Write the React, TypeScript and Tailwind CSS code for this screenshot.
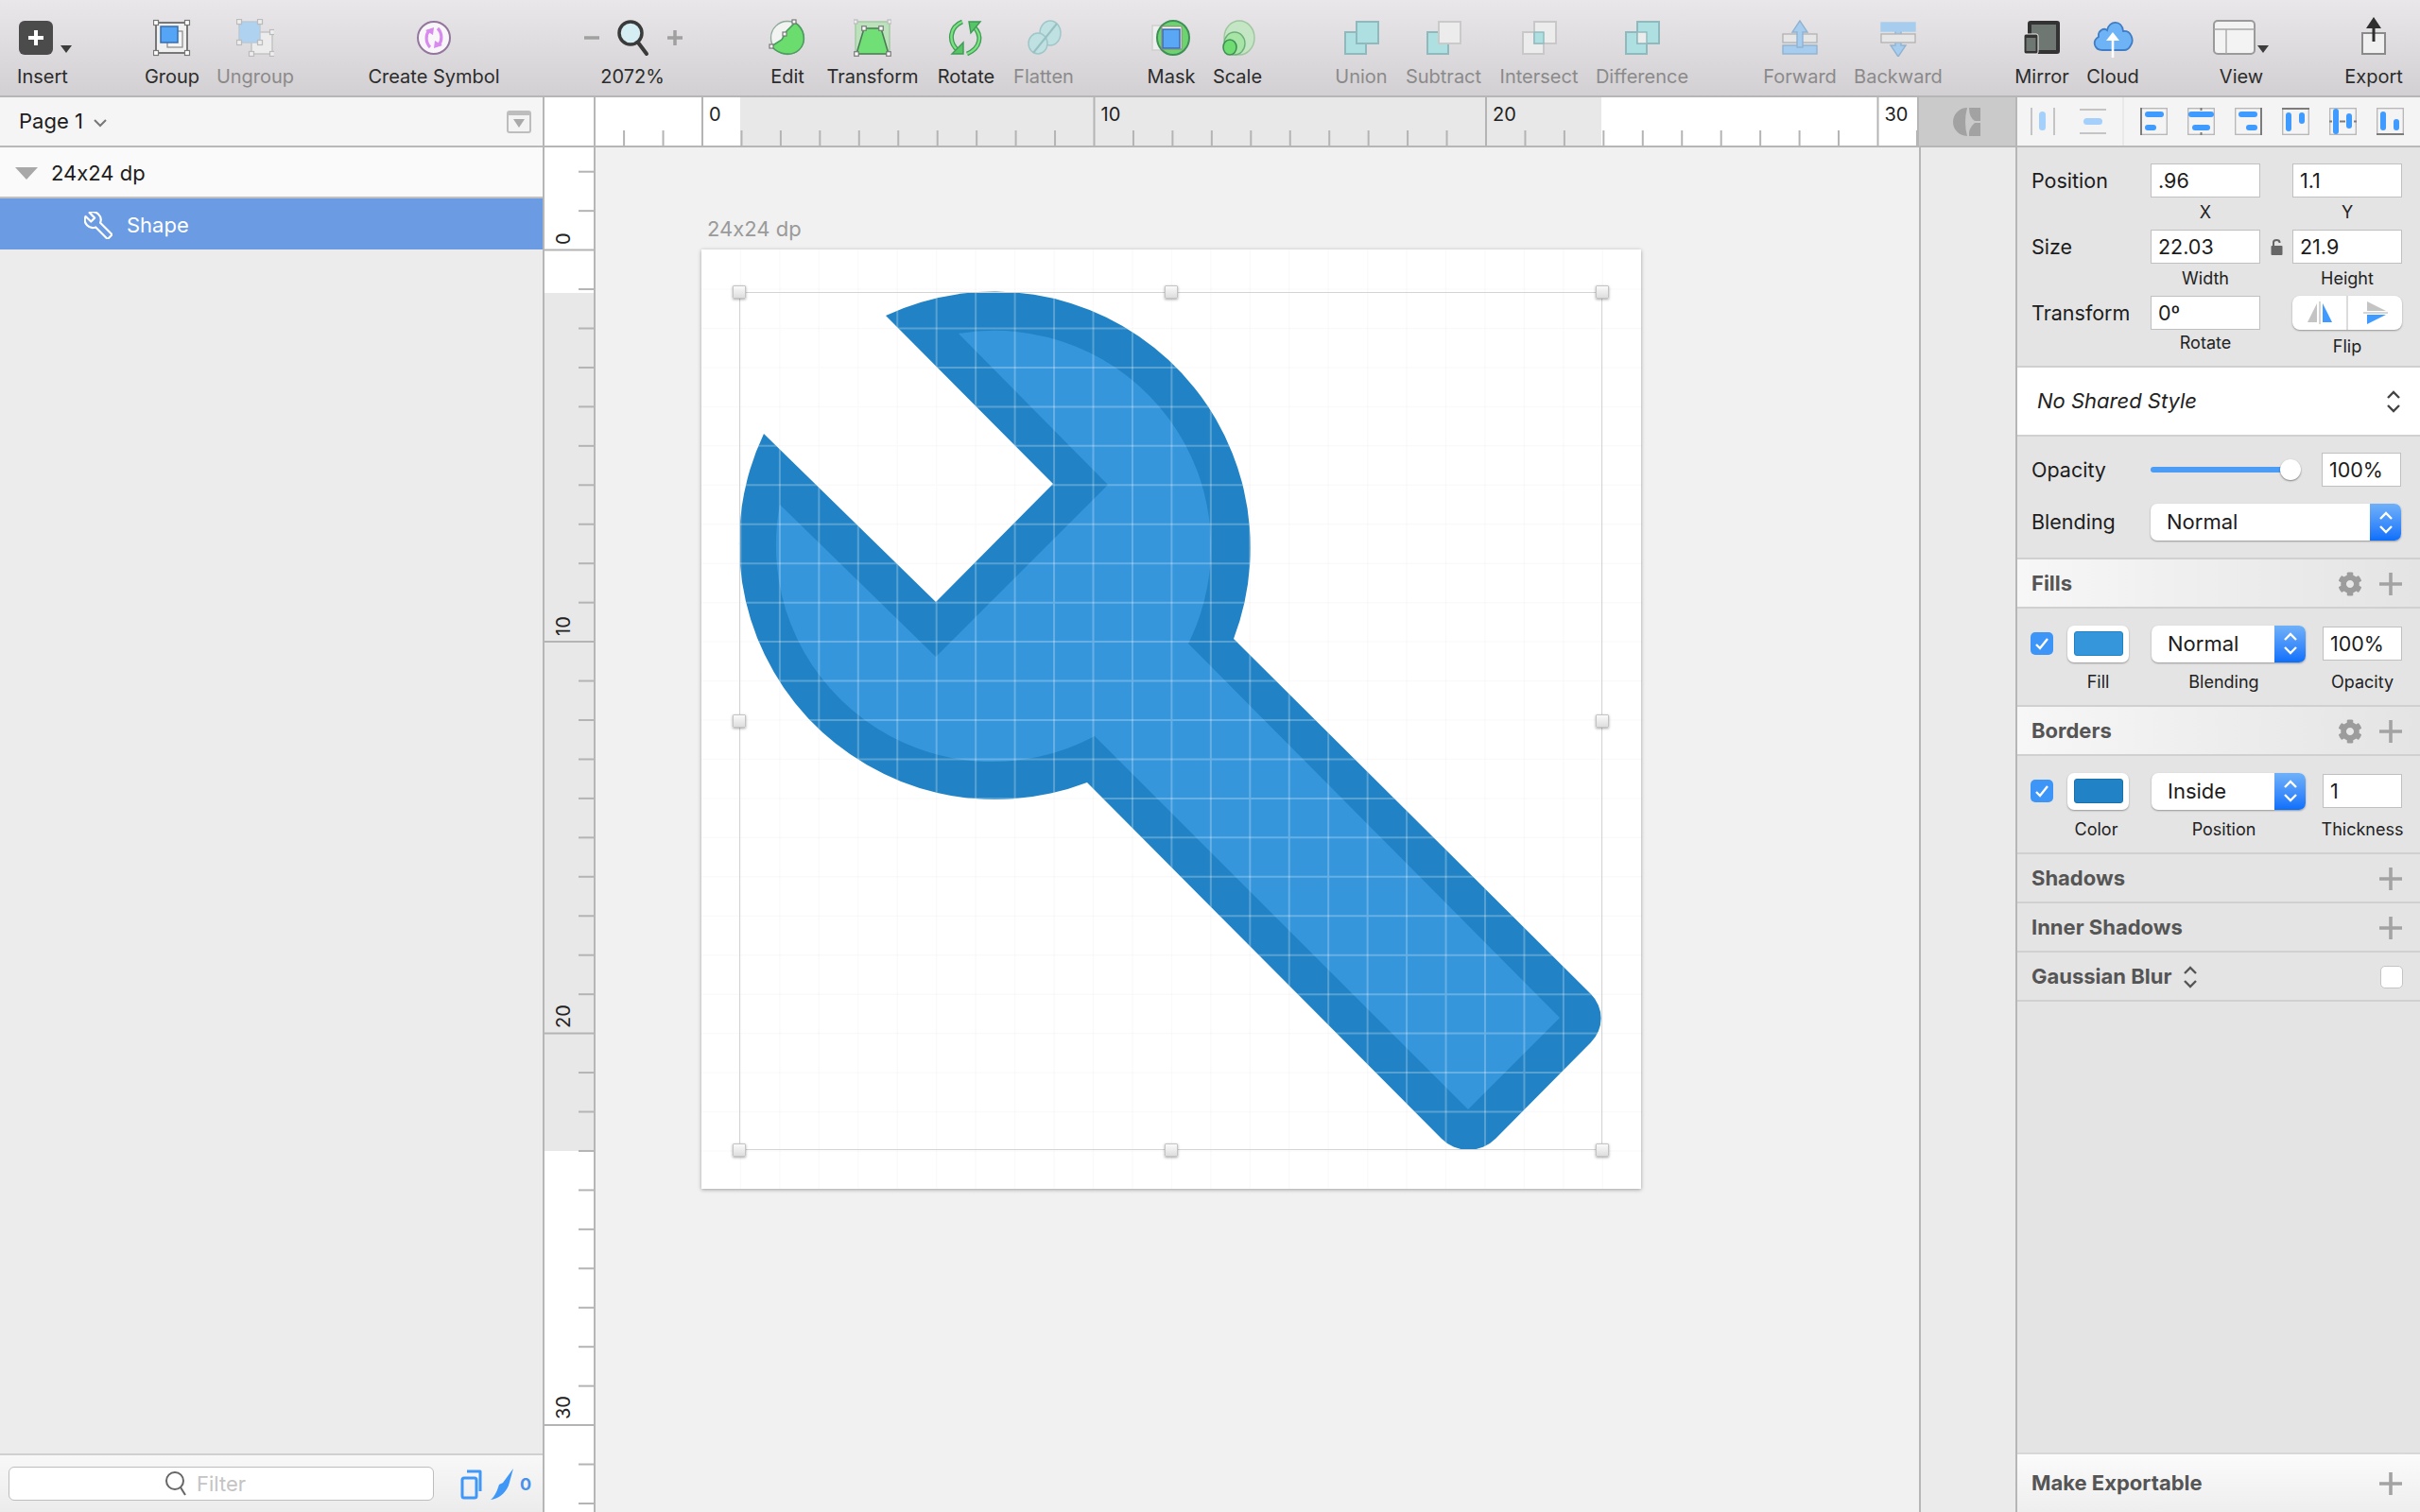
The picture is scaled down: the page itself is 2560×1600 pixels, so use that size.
import { FaCog } from 'react-icons/fa';

const UNIT = 41.45;
const WRENCH =
  'M937 334L1114 512L990 637L808 459A271 271 0 0 0 1150 828L1525 1205A40 40 0 0 0 1582 1205L1683 1103A36 36 0 0 0 1683 1052L1305 676A271 271 0 0 0 937 334Z';
const WRENCH_INNER =
  'M1014 353L1172 513L990 695L825 534A229 229 0 0 0 1158 779L1553 1174L1650 1077L1257 681A229 229 0 0 0 1014 353Z';

const range = (from: number, to: number) => {
  const out: number[] = [];
  for (let i = from; i <= to; i++) out.push(i);
  return out;
};

const Handle = ({ x, y, s = 5, fill = '#fff', stroke = '#777' }: { x: number; y: number; s?: number; fill?: string; stroke?: string }) => (
  <rect x={x - s / 2} y={y - s / 2} width={s} height={s} fill={fill} stroke={stroke} strokeWidth="1.2" />
);

const icons = {
  insert: (
    <svg width="66" height="40" viewBox="0 0 66 40">
      <rect x="8" y="2" width="36" height="36" rx="6" fill="#4b4b4b" />
      <path d="M26 12V28M18 20H34" stroke="#fff" strokeWidth="4" />
      <path d="M52 28H64L58 36Z" fill="#3c3c3c" />
    </svg>
  ),
  group: (
    <svg width="40" height="40" viewBox="0 0 40 40">
      <rect x="3" y="4" width="33" height="32" fill="#f0f0f0" stroke="#777" strokeWidth="2" />
      <rect x="15" y="13" width="16" height="17" fill="#f4f4f4" stroke="#888" strokeWidth="1.2" />
      <rect x="8" y="8" width="18" height="17" fill="#55a5f7" stroke="#3a6cab" strokeWidth="1.5" />
      <Handle x={3} y={4} />
      <Handle x={36} y={4} />
      <Handle x={3} y={36} />
      <Handle x={36} y={36} />
    </svg>
  ),
  ungroup: (
    <svg width="40" height="40" viewBox="0 0 40 40">
      <rect x="16" y="14" width="22" height="23" fill="#ececec" stroke="#c4c4c4" strokeWidth="1.5" />
      <rect x="3" y="3" width="22" height="22" fill="#aed2ef" stroke="#b9c9d6" strokeWidth="1.5" />
      <Handle x={3} y={3} fill="#eee" stroke="#bbb" />
      <Handle x={25} y={3} fill="#eee" stroke="#bbb" />
      <Handle x={3} y={25} fill="#eee" stroke="#bbb" />
      <Handle x={25} y={25} fill="#eee" stroke="#bbb" />
      <Handle x={38} y={14} fill="#eee" stroke="#bbb" />
      <Handle x={16} y={37} fill="#eee" stroke="#bbb" />
      <Handle x={38} y={37} fill="#eee" stroke="#bbb" />
    </svg>
  ),
  symbol: (
    <svg width="40" height="40" viewBox="0 0 40 40">
      <circle cx="20" cy="20" r="17" fill="#f8f6f9" stroke="#94759e" strokeWidth="2" />
      <path d="M16 30C11 25 11 17 15 12" fill="none" stroke="#d88aef" strokeWidth="3.2" />
      <path d="M24 10C29 15 29 23 25 28" fill="none" stroke="#d88aef" strokeWidth="3.2" />
      <path d="M11 12L20 9L19 17Z" fill="#d88aef" />
      <path d="M29 28L20 31L21 23Z" fill="#d88aef" />
    </svg>
  ),
  zoom: (
    <svg width="110" height="40" viewBox="0 0 110 40">
      <path d="M4 20H20" stroke="#a0a0a0" strokeWidth="3.5" />
      <path d="M92 20H108M100 12V28" stroke="#a0a0a0" strokeWidth="3.5" />
      <circle cx="53" cy="15" r="12" fill="#d5eef3" stroke="#3a3a3a" strokeWidth="3.5" />
      <path d="M61 25L70 37" stroke="#3a3a3a" strokeWidth="4" strokeLinecap="round" />
    </svg>
  ),
  edit: (
    <svg width="40" height="40" viewBox="0 0 40 40">
      <circle cx="20" cy="20" r="17.5" fill="#f2f4f2" stroke="#8fa99a" strokeWidth="1.3" />
      <path d="M28 4C38 10 41 25 32 33C25 39 12 39 3 29L14 22L19 13Z" fill="#6bdc6e" stroke="#4c9b60" strokeWidth="1.6" />
      <Handle x={27} y={3} s={4} />
      <Handle x={17} y={16} s={4} />
      <Handle x={3} y={29} s={4} />
    </svg>
  ),
  transform: (
    <svg width="40" height="40" viewBox="0 0 40 40">
      <rect x="2" y="3" width="36" height="34" fill="#bce2bc" stroke="#a6c9a6" strokeWidth="1.5" />
      <path d="M11 10H29L37 37H3Z" fill="#70e076" stroke="#4c7a56" strokeWidth="1.6" />
      <Handle x={2} y={3} s={4} fill="#eee" stroke="#bbb" />
      <Handle x={38} y={3} s={4} fill="#eee" stroke="#bbb" />
      <Handle x={11} y={10} s={4.5} />
      <Handle x={29} y={10} s={4.5} />
      <Handle x={3} y={37} s={4.5} />
      <Handle x={37} y={37} s={4.5} />
    </svg>
  ),
  rotate: (
    <svg width="46" height="40" viewBox="0 0 46 40">
      <path d="M19 3C6 8 3 24 15 34" fill="none" stroke="#3f9a57" strokeWidth="5" />
      <path d="M19 3C6 8 3 24 15 34" fill="none" stroke="#7be280" strokeWidth="2.4" />
      <path d="M24 37C38 31 41 18 31 8" fill="none" stroke="#3f9a57" strokeWidth="5" />
      <path d="M24 37C38 31 41 18 31 8" fill="none" stroke="#7be280" strokeWidth="2.4" />
      <path d="M8 37H20L20 25Z" fill="#57c465" stroke="#3f9a57" strokeWidth="1.4" />
      <path d="M38 3H26L28 15Z" fill="#57c465" stroke="#3f9a57" strokeWidth="1.4" />
    </svg>
  ),
  flatten: (
    <svg width="40" height="40" viewBox="0 0 40 40">
      <ellipse cx="27" cy="15" rx="11" ry="13" fill="#bfe1e2" stroke="#9fc6c9" strokeWidth="1.5" />
      <ellipse cx="14" cy="26" rx="10" ry="11" fill="#bfe1e2" stroke="#9fc6c9" strokeWidth="1.5" />
      <path d="M9 36L34 5" stroke="#98bfc2" strokeWidth="2" />
    </svg>
  ),
  mask: (
    <svg width="44" height="40" viewBox="0 0 44 40">
      <rect x="2" y="7" width="20" height="26" fill="#efefef" stroke="#cfcfcf" strokeWidth="1.5" />
      <ellipse cx="24" cy="20" rx="17" ry="18" fill="#6cd46e" stroke="#3f8f59" strokeWidth="2" />
      <rect x="12" y="8" width="21" height="24" fill="#fff" stroke="#9a7f7f" strokeWidth="1" />
      <rect x="13" y="11" width="18" height="20" fill="#59a7f5" stroke="#3a6dab" strokeWidth="1.5" />
    </svg>
  ),
  scale: (
    <svg width="40" height="40" viewBox="0 0 40 40">
      <ellipse cx="22" cy="20" rx="16" ry="18" fill="#c4e6c4" stroke="#9ec69e" strokeWidth="1.4" />
      <ellipse cx="17" cy="26" rx="11" ry="12" fill="#a6e5a6" stroke="#6fae7a" strokeWidth="1.4" />
      <ellipse cx="12" cy="30" rx="7" ry="8" fill="#6fdc72" stroke="#3f8f55" strokeWidth="1.6" />
    </svg>
  ),
  union: (
    <svg width="40" height="40" viewBox="0 0 40 40">
      <rect x="3" y="14" width="22" height="23" fill="#aee0e2" stroke="#8fb9bd" strokeWidth="2" />
      <rect x="15" y="3" width="23" height="23" fill="#aee0e2" stroke="#8fb9bd" strokeWidth="2" />
    </svg>
  ),
  subtract: (
    <svg width="40" height="40" viewBox="0 0 40 40">
      <rect x="3" y="14" width="22" height="23" fill="#aee0e2" stroke="#8fb9bd" strokeWidth="2" />
      <rect x="15" y="3" width="23" height="23" fill="#ececec" stroke="#cacaca" strokeWidth="2" />
    </svg>
  ),
  intersect: (
    <svg width="40" height="40" viewBox="0 0 40 40">
      <rect x="3" y="14" width="22" height="23" fill="#ececec" stroke="#c8c8c8" strokeWidth="2" />
      <rect x="15" y="3" width="23" height="23" fill="#ececec" stroke="#c8c8c8" strokeWidth="2" />
      <rect x="15" y="14" width="10" height="12" fill="#aee0e2" stroke="#8fb9bd" strokeWidth="1.4" />
    </svg>
  ),
  difference: (
    <svg width="40" height="40" viewBox="0 0 40 40">
      <rect x="3" y="14" width="22" height="23" fill="#aee0e2" stroke="#8fb9bd" strokeWidth="2" />
      <rect x="15" y="3" width="23" height="23" fill="#aee0e2" stroke="#8fb9bd" strokeWidth="2" />
      <rect x="15" y="14" width="10" height="12" fill="#ececec" stroke="#8fb9bd" strokeWidth="1.4" />
    </svg>
  ),
  forward: (
    <svg width="40" height="40" viewBox="0 0 40 40">
      <rect x="2" y="28" width="36" height="9" fill="#a7cdee" stroke="#91b3d2" strokeWidth="1.4" />
      <rect x="2" y="16" width="36" height="9" fill="#e6e6e6" stroke="#b5b5b5" strokeWidth="1.4" />
      <path d="M20 2L12 14H17V30H23V14H28Z" fill="#a7cdee" stroke="#91b3d2" strokeWidth="1.4" />
    </svg>
  ),
  backward: (
    <svg width="40" height="40" viewBox="0 0 40 40">
      <path d="M17 8V28H12L20 40L28 28H23V8Z" fill="#a7cdee" stroke="#91b3d2" strokeWidth="1.4" />
      <rect x="2" y="4" width="36" height="9" fill="#a7cdee" stroke="#a7cdee" strokeWidth="1.4" />
      <rect x="2" y="16" width="36" height="9" fill="#e6e6e6" stroke="#b5b5b5" strokeWidth="1.4" />
    </svg>
  ),
  mirror: (
    <svg width="40" height="40" viewBox="0 0 40 40">
      <rect x="5" y="2" width="34" height="35" rx="3" fill="#333" />
      <rect x="9" y="6" width="26" height="27" fill="#6e7772" />
      <rect x="1" y="16" width="15" height="21" rx="2" fill="#333" stroke="#eee" strokeWidth="1" />
      <rect x="3.5" y="20" width="10" height="14" fill="#6e7772" />
    </svg>
  ),
  cloud: (
    <svg width="44" height="44" viewBox="0 0 44 44">
      <path d="M11 33C2 33 0 23 7 19C6 12 13 9 16 12C18 1 32 1 33 13C41 12 45 22 41 28C39 32 36 33 34 33Z" fill="#6fb3f7" stroke="#3f7dc5" strokeWidth="1.8" />
      <path d="M22 41V20" stroke="#fff" strokeWidth="2.6" />
      <path d="M22 14L15 23H29Z" fill="#fff" />
    </svg>
  ),
  view: (
    <svg width="60" height="40" viewBox="0 0 60 40">
      <rect x="1" y="2" width="43" height="35" rx="4" fill="#f3f3f3" stroke="#9a9a9a" strokeWidth="2" />
      <path d="M1 11H44M14 11V37" stroke="#a8a8a8" strokeWidth="1.4" />
      <path d="M47 28H59L53 36Z" fill="#3c3c3c" />
    </svg>
  ),
  exportIcon: (
    <svg width="40" height="40" viewBox="0 0 40 40" className="overflow-visible">
      <rect x="8" y="15" width="24" height="22" fill="#f0f0f0" stroke="#8a8a8a" strokeWidth="2" />
      <path d="M20 6V24" stroke="#2f2f2f" strokeWidth="3" />
      <path d="M20 -2L12 10H28Z" fill="#2f2f2f" />
    </svg>
  ),
};

const ToolItem = ({ label, icon, cls, off }: { label: string; icon: React.ReactNode; cls: string; off?: boolean }) => (
  <div className={`flex flex-col items-center pt-[20px] ${cls}`}>
    <div className="h-[40px] flex justify-center">{icon}</div>
    <span className={`mt-[9px] text-[20px] leading-[24px] whitespace-nowrap ${off ? 'text-[#8b8a8b]' : 'text-[#2c2c2c]'}`}>{label}</span>
  </div>
);

const Toolbar = () => (
  <div className="h-[103px] flex border-b-2 border-[#b6b6b6] bg-gradient-to-b from-[#e9e7e9] to-[#d2d0d2]">
    <ToolItem label="Insert" icon={icons.insert} cls="w-[90px]" />
    <ToolItem label="Group" icon={icons.group} cls="w-[88px] ml-[48px]" />
    <ToolItem label="Ungroup" icon={icons.ungroup} cls="w-[88px]" off />
    <ToolItem label="Create Symbol" icon={icons.symbol} cls="w-[150px] ml-[70px]" />
    <ToolItem label="2072%" icon={icons.zoom} cls="w-[120px] ml-[75px]" />
    <ToolItem label="Edit" icon={icons.edit} cls="w-[60px] ml-[74px]" />
    <ToolItem label="Transform" icon={icons.transform} cls="w-[120px]" />
    <ToolItem label="Rotate" icon={icons.rotate} cls="w-[78px]" />
    <ToolItem label="Flatten" icon={icons.flatten} cls="w-[86px]" off />
    <ToolItem label="Mask" icon={icons.mask} cls="w-[70px] ml-[57px]" />
    <ToolItem label="Scale" icon={icons.scale} cls="w-[70px]" />
    <ToolItem label="Union" icon={icons.union} cls="w-[80px] ml-[56px]" off />
    <ToolItem label="Subtract" icon={icons.subtract} cls="w-[94px]" off />
    <ToolItem label="Intersect" icon={icons.intersect} cls="w-[108px]" off />
    <ToolItem label="Difference" icon={icons.difference} cls="w-[110px]" off />
    <ToolItem label="Forward" icon={icons.forward} cls="w-[100px] ml-[62px]" off />
    <ToolItem label="Backward" icon={icons.backward} cls="w-[108px]" off />
    <ToolItem label="Mirror" icon={icons.mirror} cls="w-[80px] ml-[58px]" />
    <ToolItem label="Cloud" icon={icons.cloud} cls="w-[70px]" />
    <ToolItem label="View" icon={icons.view} cls="w-[80px] ml-[61px]" />
    <ToolItem label="Export" icon={icons.exportIcon} cls="w-[90px] ml-[55px]" />
  </div>
);

const LayersPanel = () => (
  <div className="w-[576px] shrink-0 flex flex-col border-r-2 border-[#b6b6b6] bg-[#ececec]">
    <div className="h-[53px] flex items-center pl-[20px] pr-[12px] border-b-2 border-[#b9b9b9] bg-[#f5f5f5]">
      <span className="text-[22px] text-[#1c1c1c]">Page 1</span>
      <svg width="16" height="10" viewBox="0 0 16 10" className="ml-[10px] mt-[2px]">
        <path d="M2 2L8 8L14 2" fill="none" stroke="#777" strokeWidth="2" />
      </svg>
      <div className="ml-auto w-[26px] h-[24px] rounded-[3px] border-2 border-[#bdbdbd] bg-[#f3f3f3] flex items-center justify-center border-t-[5px]">
        <div className="w-0 h-0 border-x-[6px] border-x-transparent border-t-[9px] border-t-[#a9a9a9]" />
      </div>
    </div>
    <div className="h-[54px] flex items-center pl-[16px] pt-[2px] bg-[#fafafa] border-b-2 border-[#c0c0c0]">
      <div className="w-0 h-0 border-x-[12px] border-x-transparent border-t-[13px] border-t-[#a8a8a8]" />
      <span className="ml-[14px] text-[22px] text-[#1c1c1c]">24x24 dp</span>
    </div>
    <div className="h-[54px] flex items-center pl-[89px] pt-[2px] bg-[#6b9be3]">
      <svg width="30" height="29" viewBox="770 300 936 930">
        <path d={WRENCH} fill="none" stroke="#fff" strokeWidth="70" strokeLinejoin="round" />
      </svg>
      <span className="ml-[15px] text-[22px] text-white">Shape</span>
    </div>
    <div className="flex-1" />
    <div className="h-[62px] flex items-center border-t-2 border-[#d0d0d0] bg-gradient-to-b from-[#f8f8f8] to-[#ececec] pl-[9px]">
      <div className="w-[450px] h-[36px] pr-[34px] rounded-[6px] border border-[#bdbdbd] bg-white flex items-center justify-center">
        <svg width="24" height="28" viewBox="0 0 24 28">
          <circle cx="11" cy="11" r="9" fill="none" stroke="#666" strokeWidth="2" />
          <path d="M17 18L22 26" stroke="#666" strokeWidth="2" />
        </svg>
        <span className="ml-[10px] text-[22px] text-[#c4c4c4]">Filter</span>
      </div>
      <svg width="24" height="33" viewBox="0 0 24 33" className="ml-[28px]">
        <rect x="2" y="10" width="15" height="21" rx="2" fill="none" stroke="#3f97f8" strokeWidth="3" />
        <path d="M7 3H21V24" fill="none" stroke="#3f97f8" strokeWidth="3" strokeLinejoin="round" />
      </svg>
      <svg width="25" height="33" viewBox="0 0 25 33" className="ml-[8px]">
        <path d="M24 0L19 18C15 27 8 32 0 33C5 29 7 23 9 17L13 15Z" fill="#3f97f8" />
      </svg>
      <span className="ml-[6px] text-[18px] font-bold text-[#4a8fe8]">0</span>
    </div>
  </div>
);

const RulerH = () => (
  <div className="w-[1400px] relative border-r-2 border-[#b6b6b6] bg-white">
    <svg width="1398" height="51" viewBox="630 103 1398 51" className="absolute left-0 top-0">
      <rect x="783" y="103" width="911" height="51" fill="#e8e8e8" />
      {range(-2, 31).map((n) => {
        const x = 743 + n * UNIT;
        return <path key={n} d={`M${x} ${n % 10 === 0 ? 103 : 138}V154`} stroke="#b4b4b4" strokeWidth="2" />;
      })}
    </svg>
    {[0, 10, 20, 30].map((n) => (
      <span key={n} className="absolute top-[6px] text-[20px] leading-[24px] text-[#222]" style={{ left: 743 - 630 + n * UNIT + 7 }}>
        {n}
      </span>
    ))}
  </div>
);

const RulerV = () => (
  <div className="w-[54px] h-full shrink-0 relative border-r-2 border-[#b6b6b6] bg-white">
    <svg width="52" height="1444" viewBox="576 156 52 1444" className="absolute left-0 top-0">
      <rect x="576" y="310" width="52" height="908" fill="#e8e8e8" />
      {range(-2, 32).map((n) => {
        const y = 264.6 + n * UNIT;
        return <path key={n} d={`M${n % 10 === 0 ? 576 : 612} ${y}H628`} stroke="#b4b4b4" strokeWidth="2" />;
      })}
    </svg>
    {[0, 10, 20, 30].map((n) => (
      <span
        key={n}
        className="absolute left-[6px] w-[28px] h-[28px] text-left text-[20px] leading-[28px] text-[#222] -rotate-90 origin-center"
        style={{ top: 264.6 - 156 + n * UNIT - 34 }}
      >
        {n}
      </span>
    ))}
  </div>
);

const Wrench = () => (
  <svg width="995" height="994" viewBox="742 264 995 994" className="absolute left-0 top-0">
    <defs>
      <clipPath id="wrench-clip">
        <path d={WRENCH} />
      </clipPath>
    </defs>
    {range(1, 23).map((n) => (
      <path key={n} d={`M${742 + n * UNIT} 264V1258M742 ${264.6 + n * UNIT}H1737`} stroke="#000" strokeOpacity="0.02" strokeWidth="1.5" />
    ))}
    <path d={WRENCH} fill="#2183c5" />
    <path d={WRENCH_INNER} fill="#3596dc" />
    <g clipPath="url(#wrench-clip)">
      {range(1, 23).map((n) => (
        <path key={n} d={`M${742 + n * UNIT} 264V1258M742 ${264.6 + n * UNIT}H1737`} stroke="#fff" strokeOpacity="0.25" strokeWidth="2" />
      ))}
    </g>
  </svg>
);

const SizeHandle = () => (
  <div className="w-[14px] h-[14px] rounded-[1px] border border-[#c4c4c4] bg-gradient-to-b from-[#fafafa] to-[#dedede] shadow-[0_1px_3px_rgba(0,0,0,0.35)]" />
);

const Artboard = () => (
  <div className="relative w-[994px] h-[994px] bg-white shadow-[0_1px_4px_rgba(0,0,0,0.35)]">
    <Wrench />
    <div className="absolute left-[40px] top-[45px] w-[913px] h-[908px] border-[1.5px] border-[#d4d4d4]" />
    <div className="absolute left-[33px] top-[38px] w-[927px] h-[922px] flex flex-col justify-between">
      <div className="flex justify-between">
        <SizeHandle />
        <SizeHandle />
        <SizeHandle />
      </div>
      <div className="flex justify-between">
        <SizeHandle />
        <SizeHandle />
      </div>
      <div className="flex justify-between">
        <SizeHandle />
        <SizeHandle />
        <SizeHandle />
      </div>
    </div>
  </div>
);

const Canvas = () => (
  <div className="w-[1402px] shrink-0 border-r-2 border-[#b6b6b6] bg-[#f1f1f1] pl-[112px] pt-[74px]">
    <div className="h-[24px] mb-[10px] pl-[6px] text-[22px] leading-[24px] text-[#9a9a9a]">24x24 dp</div>
    <Artboard />
  </div>
);

const Pill = ({ x, y, w, h }: { x: number; y: number; w: number; h: number }) => (
  <rect x={x} y={y} width={w} height={h} rx={Math.min(w, h) / 2} fill="#3f9bff" />
);

const AlignIcon = ({ edge, pills }: { edge: string; pills: number[][] }) => (
  <svg width="29" height="29" viewBox="0 0 29 29">
    <rect x="0.7" y="0.7" width="27.6" height="27.6" fill="none" stroke="#b5b5b5" strokeWidth="1.3" />
    <path d={edge} stroke="#7c7c7c" strokeWidth="2" fill="none" />
    {pills.map((p, i) => (
      <Pill key={i} x={p[0]} y={p[1]} w={p[2]} h={p[3]} />
    ))}
  </svg>
);

const AlignBar = () => (
  <div className="h-[53px] flex border-b-2 border-[#b9b9b9] bg-[#f4f4f4]">
    <div className="w-[113px] flex items-center pl-[14px] border-r-2 border-[#e9e9e9]">
      <svg width="26" height="29" viewBox="0 0 26 29">
        <path d="M1 0V29M25 0V29" stroke="#c4c4c4" strokeWidth="2" />
        <rect x="9" y="4" width="7" height="20" rx="3.5" fill="#a4d0fb" />
      </svg>
      <svg width="28" height="29" viewBox="0 0 28 29" className="ml-[26px]">
        <path d="M0 2H28M0 27H28" stroke="#c4c4c4" strokeWidth="2" />
        <rect x="4" y="11" width="20" height="7" rx="3.5" fill="#a4d0fb" />
      </svg>
    </div>
    <div className="flex items-center gap-[21px] pl-[17px]">
      <AlignIcon edge="M1 0V29" pills={[[5, 4, 20, 6], [5, 18, 12, 6]]} />
      <AlignIcon edge="M14.5 0V3M14.5 26V29" pills={[[1, 4, 27, 6], [5, 18, 19, 6]]} />
      <AlignIcon edge="M28 0V29" pills={[[4, 4, 20, 6], [12, 18, 12, 6]]} />
      <AlignIcon edge="M0 1H29" pills={[[4, 5, 6, 20], [18, 5, 6, 12]]} />
      <AlignIcon edge="M0 14.5H3M11 14.5H17M26 14.5H29" pills={[[4, 1, 6, 27], [18, 6, 6, 16]]} />
      <AlignIcon edge="M0 28H29" pills={[[4, 4, 6, 20], [18, 12, 6, 12]]} />
    </div>
  </div>
);

const Box = ({ value, cls = 'w-[116px]' }: { value: string; cls?: string }) => (
  <div className={`h-[36px] border-[1.5px] border-[#c0c0c0] bg-white pl-[7px] flex items-center text-[21.5px] text-[#1c1c1c] ${cls}`}>{value}</div>
);

const Caption = ({ text, cls = 'w-[116px]' }: { text: string; cls?: string }) => (
  <div className={`h-[30px] flex items-center justify-center whitespace-nowrap text-[18px] text-[#222] ${cls}`}>{text}</div>
);

const UpDown = ({ color, size = 'w-[16px] h-[26px]' }: { color: string; size?: string }) => (
  <svg viewBox="0 0 16 26" className={size}>
    <path d="M2 9L8 3L14 9M2 17L8 23L14 17" fill="none" stroke={color} strokeWidth="2.4" />
  </svg>
);

const Select = ({ value, cls, blue }: { value: string; cls: string; blue: string }) => (
  <div className={`h-[39px] flex items-stretch rounded-[7px] bg-white shadow-[0_1px_2px_rgba(0,0,0,0.35)] overflow-hidden ${cls}`}>
    <span className="flex-1 pl-[17px] flex items-center text-[22px] text-[#1c1c1c]">{value}</span>
    <div className={`flex items-center justify-center bg-gradient-to-b from-[#6fb0f8] to-[#0a6ffb] ${blue}`}>
      <UpDown color="#fff" />
    </div>
  </div>
);

const Check = () => (
  <div className="w-[24px] h-[24px] rounded-[5px] bg-[#3d96f7] flex items-center justify-center">
    <svg width="16" height="14" viewBox="0 0 16 14">
      <path d="M2 8L6 12L14 2" fill="none" stroke="#fff" strokeWidth="2.4" />
    </svg>
  </div>
);

const Swatch = ({ color, edge }: { color: string; edge: string }) => (
  <div className="w-[65px] h-[39px] rounded-[7px] bg-white shadow-[0_1px_2px_rgba(0,0,0,0.35)] flex items-center justify-center">
    <div className={`w-[52px] h-[26px] rounded-[3px] border-[1.5px] ${color} ${edge}`} />
  </div>
);

const Plus = () => (
  <svg width="24" height="24" viewBox="0 0 24 24">
    <path d="M12 0V24M0 12H24" stroke="#a3a3a3" strokeWidth="3.6" />
  </svg>
);

const Header = ({ title, gear, cls }: { title: string; gear?: boolean; cls?: string }) => (
  <div className={`h-[52px] flex items-center pl-[15px] pr-[19px] pt-[1px] border-b-2 border-[#d0d0d0] ${cls ?? ''}`}>
    <span className="text-[22px] font-bold text-[#555]">{title}</span>
    {gear && <FaCog className="ml-auto mr-[18px] text-[26px] text-[#9c9c9c]" />}
    <div className={gear ? '' : 'ml-auto'}>
      <Plus />
    </div>
  </div>
);

const Inspector = () => (
  <div className="w-[426px] shrink-0 flex flex-col bg-[#e4e4e4]">
    <AlignBar />
    <div className="h-[233px] pt-[17px] pl-[15px] border-b-2 border-[#d0d0d0]">
      <div className="h-[70px] flex">
        <span className="w-[126px] h-[36px] flex items-center text-[21.5px] text-[#1c1c1c]">Position</span>
        <div>
          <Box value=".96" />
          <Caption text="X" />
        </div>
        <div className="ml-[34px]">
          <Box value="1.1" />
          <Caption text="Y" />
        </div>
      </div>
      <div className="h-[70px] flex">
        <span className="w-[126px] h-[36px] flex items-center text-[21.5px] text-[#1c1c1c]">Size</span>
        <div>
          <Box value="22.03" />
          <Caption text="Width" />
        </div>
        <div className="w-[34px] h-[36px] flex items-center justify-center">
          <svg width="13" height="18" viewBox="0 0 13 18">
            <path d="M3 8V4.5C3 1 9.5 1 9.5 4.5V5" fill="none" stroke="#666" strokeWidth="2" />
            <rect x="0.5" y="8" width="12" height="10" rx="1" fill="#666" />
          </svg>
        </div>
        <div>
          <Box value="21.9" />
          <Caption text="Height" />
        </div>
      </div>
      <div className="flex">
        <span className="w-[126px] h-[36px] flex items-center text-[21.5px] text-[#1c1c1c]">Transform</span>
        <div>
          <Box value="0º" />
          <Caption text="Rotate" cls="w-[116px] -mt-[2px]" />
        </div>
        <div className="ml-[34px]">
          <div className="w-[116px] h-[36px] rounded-[8px] bg-white shadow-[0_1px_2px_rgba(0,0,0,0.35)] flex">
            <div className="flex-1 flex items-center justify-center border-r-2 border-[#dcdcdc]">
              <svg width="28" height="24" viewBox="0 0 28 24">
                <path d="M11 2V22H1Z" fill="#c4c4c4" />
                <path d="M17 2V22H27Z" fill="#3f9bff" />
                <path d="M14 0V24" stroke="#c4c4c4" strokeWidth="1.4" />
              </svg>
            </div>
            <div className="flex-1 flex items-center justify-center">
              <svg width="26" height="26" viewBox="0 0 26 26">
                <path d="M4 1V11H24Z" fill="#c4c4c4" />
                <path d="M4 25V15H24Z" fill="#3f9bff" />
                <path d="M0 13H26" stroke="#c4c4c4" strokeWidth="1.4" />
              </svg>
            </div>
          </div>
          <Caption text="Flip" cls="w-[116px] mt-[2px]" />
        </div>
      </div>
    </div>
    <div className="h-[73px] flex items-center pl-[21px] pr-[20px] bg-white border-b-2 border-[#d0d0d0]">
      <span className="text-[22px] italic text-[#222]">No Shared Style</span>
      <div className="ml-auto">
        <UpDown color="#444" />
      </div>
    </div>
    <div className="h-[130px] pt-[17px] pl-[15px] border-b-2 border-[#d0d0d0]">
      <div className="h-[54px] flex items-start">
        <span className="w-[126px] h-[36px] flex items-center text-[21.5px] text-[#1c1c1c]">Opacity</span>
        <div className="w-[160px] h-[36px] flex items-center">
          <div className="w-[140px] h-[6px] rounded-l-[3px] bg-[#4a9cf5]" />
          <div className="w-[22px] h-[22px] -ml-[3px] rounded-full bg-white shadow-[0_1px_2px_rgba(0,0,0,0.45)]" />
        </div>
        <Box value="100%" cls="w-[84px] ml-[21px]" />
      </div>
      <div className="flex items-center">
        <span className="w-[126px] text-[21.5px] text-[#1c1c1c]">Blending</span>
        <Select value="Normal" cls="w-[265px]" blue="w-[33px]" />
      </div>
    </div>
    <Header title="Fills" gear cls="bg-gradient-to-r from-[#f7f7f7] to-[#e4e4e4]" />
    <div className="h-[104px] pt-[17px] pl-[14px] border-b-2 border-[#d0d0d0]">
      <div className="flex items-center h-[40px]">
        <Check />
        <div className="ml-[15px]">
          <Swatch color="bg-[#3596dc]" edge="border-[#2183c5]" />
        </div>
        <Select value="Normal" cls="w-[163px] ml-[24px]" blue="w-[33px]" />
        <Box value="100%" cls="w-[84px] ml-[18px]" />
      </div>
      <div className="flex mt-[5px]">
        <Caption text="Fill" cls="w-[65px] ml-[39px]" />
        <Caption text="Blending" cls="w-[153px] ml-[24px]" />
        <Caption text="Opacity" cls="w-[84px] ml-[28px]" />
      </div>
    </div>
    <Header title="Borders" gear cls="bg-gradient-to-r from-[#f7f7f7] to-[#e4e4e4]" />
    <div className="h-[104px] pt-[17px] pl-[14px] border-b-2 border-[#d0d0d0]">
      <div className="flex items-center h-[40px]">
        <Check />
        <div className="ml-[15px]">
          <Swatch color="bg-[#2183c5]" edge="border-[#1b70aa]" />
        </div>
        <Select value="Inside" cls="w-[163px] ml-[24px]" blue="w-[33px]" />
        <Box value="1" cls="w-[84px] ml-[18px]" />
      </div>
      <div className="flex mt-[5px]">
        <Caption text="Color" cls="w-[65px] ml-[37px]" />
        <Caption text="Position" cls="w-[153px] ml-[26px]" />
        <Caption text="Thickness" cls="w-[84px] ml-[28px]" />
      </div>
    </div>
    <Header title="Shadows" />
    <Header title="Inner Shadows" />
    <div className="h-[52px] flex items-center pl-[15px] pr-[18px] pt-[1px] border-b-2 border-[#d0d0d0]">
      <span className="text-[22px] font-bold text-[#555]">Gaussian Blur</span>
      <div className="ml-[12px]">
        <UpDown color="#555" />
      </div>
      <div className="ml-auto w-[24px] h-[24px] rounded-[5px] border border-[#c4c4c4] bg-white" />
    </div>
    <div className="flex-1" />
    <div className="h-[63px] flex items-center pl-[15px] pr-[19px] border-t-2 border-[#d8d8d8] bg-gradient-to-b from-[#fbfbfb] to-[#eeeeee]">
      <span className="text-[22px] font-bold text-[#555]">Make Exportable</span>
      <div className="ml-auto">
        <Plus />
      </div>
    </div>
  </div>
);

export default function App() {
  return (
    <div className="w-[2560px] h-[1600px] flex flex-col overflow-hidden font-['Inter',sans-serif] [font-feature-settings:'calt'_0] bg-[#ececec]">
      <Toolbar />
      <div className="h-[1497px] flex">
        <LayersPanel />
        <div className="w-[1558px] shrink-0 flex flex-col border-r-2 border-[#b6b6b6]">
          <div className="h-[53px] flex border-b-2 border-[#b6b6b6]">
            <div className="w-[54px] border-r-2 border-[#b6b6b6] bg-white" />
            <RulerH />
            <div className="flex-1 bg-[#cacaca] flex items-center justify-center">
              <svg width="30" height="30" viewBox="0 0 30 30">
                <path d="M15 0A15 15 0 0 0 15 30Q11 15 15 0Z" fill="#a2a2a2" />
                <path d="M17 0H29V14H23Q17 10 17 0Z" fill="#a2a2a2" />
                <path d="M29 16V30H17Q16 22 23 16Z" fill="#a2a2a2" />
              </svg>
            </div>
          </div>
          <div className="flex-1 flex min-h-0">
            <RulerV />
            <Canvas />
            <div className="flex-1 bg-[#ebebeb]" />
          </div>
        </div>
        <Inspector />
      </div>
    </div>
  );
}
